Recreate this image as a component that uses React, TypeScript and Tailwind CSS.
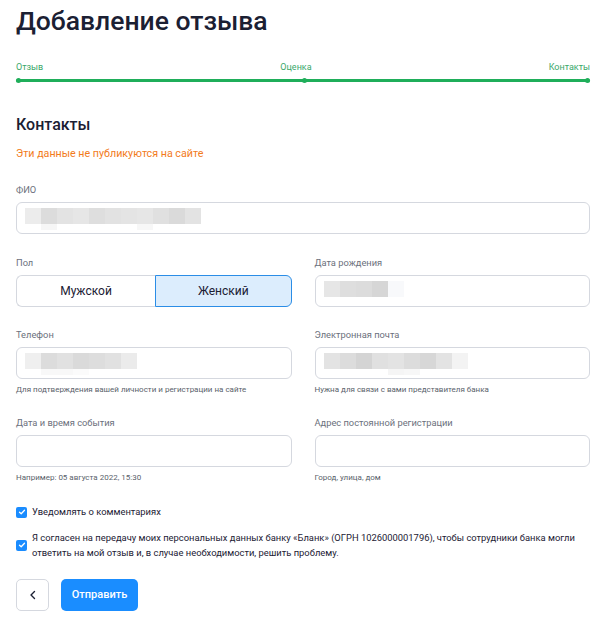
import React from "react";

const Mosaic = ({ row1, row2 = [], offset2 = 0 }: { row1: string[]; row2?: string[]; offset2?: number }) => (
  <div className="absolute left-[8px] top-[5px] flex flex-col">
    <div className="flex">
      {row1.map((c, i) => (
        <div key={i} className="h-[16px] w-[16px]" style={{ background: c }} />
      ))}
    </div>
    <div className="flex" style={{ marginLeft: offset2 }}>
      {row2.map((c, i) => (
        <div key={i} className="h-[6px] w-[16px]" style={{ background: c }} />
      ))}
    </div>
  </div>
);

const Label = ({ children }: { children: React.ReactNode }) => (
  <div className="mb-[6px] text-[9.3px] leading-[12px] text-[#6b707c]">{children}</div>
);

const Hint = ({ children }: { children: React.ReactNode }) => (
  <div className="mt-[6px] text-[8px] leading-[10px] text-[#5a5f6b]">{children}</div>
);

const Input = ({ children }: { children?: React.ReactNode }) => (
  <div className="relative h-[32px] overflow-hidden rounded-[6px] border border-[#d5d8df] bg-white">{children}</div>
);

const Check = () => (
  <div className="flex h-[11px] w-[11px] shrink-0 items-center justify-center rounded-[2px] bg-[#1a8cff]">
    <svg width="8" height="8" viewBox="0 0 8 8" fill="none">
      <path d="M1.5 4.2 L3.2 5.8 L6.5 2.3" stroke="white" strokeWidth="1.3" strokeLinecap="round" strokeLinejoin="round" />
    </svg>
  </div>
);

export default function App() {
  return (
    <div className="w-[602px] bg-white pl-4 pr-3 font-['Roboto',sans-serif]">
      <h1 className="pt-[4px] text-[26.5px] font-medium leading-[34px] text-[#1b2033]">Добавление отзыва</h1>

      <div className="mt-[23px]">
        <div className="flex justify-between text-[9px] leading-[12px] text-[#3aa86a]">
          <span>Отзыв</span>
          <span>Оценка</span>
          <span>Контакты</span>
        </div>
        <div className="relative mt-[6px] h-[3px] rounded-full bg-[#1fae5a]">
          <div className="absolute left-0 top-[-1px] h-[5px] w-[5px] rounded-full bg-[#1fae5a]" />
          <div className="absolute left-[286px] top-[-1px] h-[5px] w-[5px] rounded-full bg-[#1fae5a]" />
          <div className="absolute right-0 top-[-1px] h-[5px] w-[5px] rounded-full bg-[#1fae5a]" />
        </div>
      </div>

      <h2 className="mt-[32px] text-[16px] font-medium leading-[22px] text-[#1b2033]">Контакты</h2>
      <div className="mt-[11px] text-[10.7px] leading-[14px] text-[#f27b1c]">Эти данные не публикуются на сайте</div>

      <div className="mt-[23px]">
        <Label>ФИО</Label>
        <Input>
          <Mosaic
            row1={["#ececec", "#dcdcdc", "#e3e3e3", "#e6e6e6", "#dedede", "#e2e2e2", "#e4e4e4", "#e6e6e6", "#e0e0e0", "#dadada", "#e3e3e3"]}
            row2={["#f6f6f6", "#ffffff", "#ffffff", "#ffffff", "#ffffff", "#ffffff", "#f7f7f7"]}
            offset2={16}
          />
        </Input>
      </div>

      <div className="mt-[23px] grid grid-cols-2 gap-x-[23px] gap-y-[22px]">
        <div>
          <Label>Пол</Label>
          <div className="flex h-[32px]">
            <div className="flex w-[139px] items-center justify-center rounded-l-[6px] border border-r-0 border-[#d5d8df] text-[12px] text-[#1b2033]">
              Мужской
            </div>
            <div className="flex flex-1 items-center justify-center rounded-r-[6px] border border-[#2b8de6] bg-[#dcedfd] text-[12px] text-[#1b2033]">
              Женский
            </div>
          </div>
        </div>
        <div>
          <Label>Дата рождения</Label>
          <Input>
            <Mosaic row1={["#e6e6e6", "#dedede", "#dcdcdc", "#d6d6d6", "#f8f9fb"]} />
          </Input>
        </div>

        <div>
          <Label>Телефон</Label>
          <Input>
            <Mosaic
              row1={["#efefef", "#dcdcdc", "#e1e1e1", "#dadada", "#dddddd", "#e1e1e1", "#ebebeb"]}
              row2={["#f8f8f8", "#f8f8f8", "#fbfbfb"]}
              offset2={16}
            />
          </Input>
          <Hint>Для подтверждения вашей личности и регистрации на сайте</Hint>
        </div>
        <div>
          <Label>Электронная почта</Label>
          <Input>
            <Mosaic
              row1={["#e3e3e3", "#dcdcdc", "#d4d4d4", "#e0e0e0", "#e3e3e3", "#dcdcdc", "#d7d7d7", "#e3e3e3", "#f3f3f3"]}
              row2={["#f5f5f5", "#f7f7f7"]}
              offset2={64}
            />
          </Input>
          <Hint>Нужна для связи с вами представителя банка</Hint>
        </div>

        <div>
          <Label>Дата и время события</Label>
          <Input />
          <Hint>Например: 05 августа 2022, 15:30</Hint>
        </div>
        <div>
          <Label>Адрес постоянной регистрации</Label>
          <Input />
          <Hint>Город, улица, дом</Hint>
        </div>
      </div>

      <div className="mt-[22px] flex items-center gap-[5px]">
        <Check />
        <span className="text-[9.4px] leading-[14px] text-[#1b2033]">Уведомлять о комментариях</span>
      </div>
      <div className="mt-[11px] flex items-center gap-[5px]">
        <Check />
        <span className="text-[9.4px] leading-[15px] text-[#1b2033]">
          Я согласен на передачу моих персональных данных банку «Бланк» (ОГРН 1026000001796), чтобы сотрудники банка могли ответить на мой отзыв и, в случае необходимости, решить проблему.
        </span>
      </div>

      <div className="mt-[19px] flex gap-[12px] pb-[8px]">
        <div className="flex h-[32px] w-[33px] items-center justify-center rounded-[5px] border border-[#d5d8df]">
          <svg width="10" height="10" viewBox="0 0 10 10" fill="none">
            <path d="M6.5 1.5 L3 5 L6.5 8.5" stroke="#1b2033" strokeWidth="1.4" strokeLinecap="round" strokeLinejoin="round" />
          </svg>
        </div>
        <div className="flex h-[32px] w-[77px] items-center justify-center rounded-[5px] bg-[#1a8dff] text-[11px] font-medium text-white">
          Отправить
        </div>
      </div>
    </div>
  );
}
